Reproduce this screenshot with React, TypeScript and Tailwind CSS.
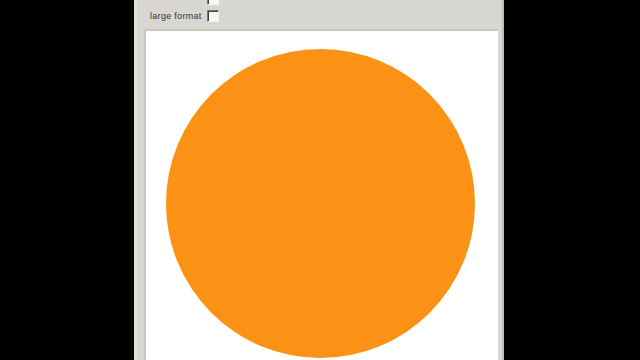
import React from "react";

function Checkbox() {
  return (
    <div className="w-[12px] h-[12px] border-t border-l border-[#7a7873] border-b border-r border-b-[#f4f3f0] border-r-[#f4f3f0] bg-[#f7f7f5]">
      <div className="w-full h-full border-t border-l border-[#3f3f3f] border-b-0 border-r-0" />
    </div>
  );
}

export default function App() {
  return (
    <div className="w-[640px] h-[360px] bg-black overflow-hidden flex" style={{ fontFamily: '"Liberation Sans", Arial, sans-serif' }}>
      <div className="ml-[134px] w-[370px] h-full bg-[#d8d6d0] border-l-[3px] border-[#e3e1dc] border-r-[2px] border-r-[#bdbab4] flex flex-col">
        <div className="h-[29px] flex flex-col shrink-0">
          <div className="flex items-center h-[12px] mt-[-7px] pl-[70px]">
            <Checkbox />
          </div>
          <div className="flex items-center h-[12px] mt-[5px] pl-[13px] gap-[5px]">
            <span className="text-[9px] leading-none text-[#333333] tracking-[0.3px]">large format</span>
            <Checkbox />
          </div>
        </div>
        <div className="flex-1 ml-[7px] mr-[4px] bg-white border-t-2 border-l-2 border-[#c9c6c0] border-r-0 flex justify-center pt-[18px]">
          <div className="w-[309px] h-[309px] rounded-full bg-[#fb9216] shrink-0 mr-[3px]" />
        </div>
      </div>
    </div>
  );
}
